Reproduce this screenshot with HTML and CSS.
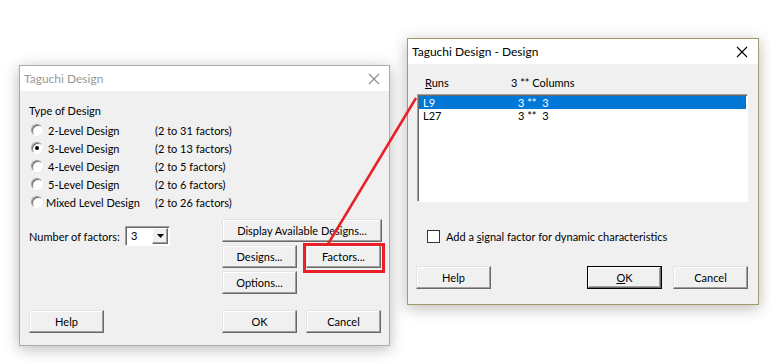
FILE: index.html
```html
<!DOCTYPE html>
<html>
<head>
<meta charset="utf-8">
<link rel="stylesheet" href="styles.css">
</head>
<body>
<div class="desktop">
  <div class="dlg dlg-main">
    <div class="titlebar inactive">
      <span class="title">Taguchi Design</span>
      <svg class="close" width="12" height="12" viewBox="0 0 12 12"><path d="M1 1 L11 11 M11 1 L1 11" stroke="#8c8c8c" stroke-width="1.1" fill="none"/></svg>
    </div>
    <div class="body main-body">
      <div class="group-title">Type of Design</div>
      <div class="radios">
        <div class="rrow"><span class="radio"></span><span class="rlabel">2-Level Design</span><span class="rdesc">(2 to 31 factors)</span></div>
        <div class="rrow"><span class="radio checked"></span><span class="rlabel">3-Level Design</span><span class="rdesc">(2 to 13 factors)</span></div>
        <div class="rrow"><span class="radio"></span><span class="rlabel">4-Level Design</span><span class="rdesc">(2 to 5 factors)</span></div>
        <div class="rrow"><span class="radio"></span><span class="rlabel">5-Level Design</span><span class="rdesc">(2 to 6 factors)</span></div>
        <div class="rrow"><span class="radio"></span><span class="rlabel mixed">Mixed Level Design</span><span class="rdesc">(2 to 26 factors)</span></div>
      </div>
      <div class="mid">
        <div class="nf">
          <span class="nf-label">Number of factors:</span>
          <div class="combo">
            <span class="combo-val">3</span>
            <span class="combo-btn"><svg width="7" height="4" viewBox="0 0 7 4"><path d="M0 0 H7 L3.5 4 Z" fill="#000"/></svg></span>
          </div>
        </div>
        <div class="btn-grid">
          <button class="btn wide">Display Available Designs...</button>
          <button class="btn">Designs...</button>
          <button class="btn">Factors...</button>
          <button class="btn">Options...</button>
        </div>
      </div>
      <div class="foot">
        <button class="btn">Help</button>
        <div class="spacer"></div>
        <button class="btn">OK</button>
        <button class="btn">Cancel</button>
      </div>
    </div>
  </div>

  <div class="dlg dlg-design">
    <div class="titlebar">
      <span class="title">Taguchi Design - Design</span>
      <svg class="close" width="12" height="12" viewBox="0 0 12 12"><path d="M1 1 L11 11 M11 1 L1 11" stroke="#000" stroke-width="1.1" fill="none"/></svg>
    </div>
    <div class="body design-body">
      <div class="list-head"><span class="col-runs"><u>R</u>uns</span><span class="col-cols">3 ** Columns</span></div>
      <div class="listbox">
        <div class="lrow sel"><span class="c1">L9</span><span class="c2">3 **&nbsp; 3</span></div>
        <div class="lrow"><span class="c1">L27</span><span class="c2">3 **&nbsp; 3</span></div>
      </div>
      <div class="chk-row"><span class="checkbox"></span><span>Add a <u>s</u>ignal factor for dynamic characteristics</span></div>
      <div class="foot foot2">
        <button class="btn">Help</button>
        <div class="spacer"></div>
        <button class="btn default"><u>O</u>K</button>
        <button class="btn">Cancel</button>
      </div>
    </div>
  </div>

  <svg class="annot" width="771" height="362" viewBox="0 0 771 362">
    <line x1="328" y1="244" x2="416" y2="98" stroke="#e8202a" stroke-width="2.5"/>
    <rect x="304.5" y="244.5" width="79" height="27" fill="none" stroke="#e8202a" stroke-width="3"/>
  </svg>
</div>
</body>
</html>
```
FILE: styles.css
```css
* { box-sizing: border-box; }
html, body { margin: 0; padding: 0; background: #fff; }
body {
  font-family: Lato, "Open Sans", "Liberation Sans", sans-serif;
  font-size: 11px;
  color: #000;
}
.desktop {
  position: relative;
  width: 771px;
  height: 362px;
  overflow: hidden;
}
.dlg {
  position: absolute;
  background: #f0f0f0;
  display: flex;
  flex-direction: column;
  box-shadow: 0 3px 14px rgba(0,0,0,0.28);
}
.dlg-main {
  left: 19px; top: 65px; width: 371px; height: 281px;
  border: 1px solid #ababab;
}
.dlg-design {
  left: 407px; top: 38px; width: 352px; height: 267px;
  border: 1px solid #a39a6a;
}
.titlebar {
  height: 25px;
  background: #fff;
  display: flex;
  align-items: center;
  padding: 0 0 0 4px;
  flex: none;
}
.titlebar .title { font-size: 12px; flex: 1; }
.titlebar.inactive .title { color: #999; }
.titlebar .close { margin-right: 10px; }
.dlg-main .titlebar .close { margin-right: 9px; }

.body { flex: 1; display: flex; flex-direction: column; }
.main-body { padding: 11px 8px 0 9px; }
.group-title { height: 19px; line-height: 18px; }
.radios { display: flex; flex-direction: column; }
.rrow { height: 18px; display: flex; align-items: center; }
.radio {
  width: 12px; height: 12px; border-radius: 50%;
  margin: 0 5px 0 2px;
  background: #fff;
  border: 1px solid;
  border-color: #a0a0a0 #fff #fff #a0a0a0;
  box-shadow: inset 1px 1px 0 #696969, 0 0 0 0.5px #e3e3e3;
  position: relative;
  flex: none;
}
.radio.checked::after {
  content: "";
  position: absolute;
  left: 3px; top: 3px; width: 4px; height: 4px; border-radius: 50%;
  background: #000;
}
.rlabel { width: 107px; flex: none; }
.rlabel.mixed { margin-left: -2px; width: 109px; }

.mid { display: flex; margin-top: 8px; }
.nf { display: flex; align-items: center; height: 20px; margin-top: 7px; }
.nf-label { width: 96px; }
.combo {
  width: 45px; height: 20px;
  background: #fff;
  border: 1px solid; border-color: #a0a0a0 #fff #fff #a0a0a0;
  box-shadow: inset 1px 1px 0 #696969;
  display: flex; align-items: stretch;
  padding: 1px 1px 1px 2px;
}
.combo-val { flex: 1; padding-left: 3px; line-height: 16px; }
.combo-btn {
  width: 16px;
  background: #f0f0f0;
  border: 1px solid; border-color: #fff #696969 #696969 #fff;
  box-shadow: inset -1px -1px 0 #a0a0a0;
  display: flex; align-items: center; justify-content: center;
}
.btn-grid {
  margin-left: auto;
  display: grid;
  grid-template-columns: 75px 75px;
  column-gap: 9px;
  row-gap: 3px;
}
.btn-grid .wide { grid-column: 1 / 3; }
.btn {
  font: inherit;
  color: #000;
  height: 23px;
  width: 75px;
  padding: 0;
  background: #f0f0f0;
  border: 1px solid;
  border-color: #e3e3e3 #696969 #696969 #e3e3e3;
  box-shadow: inset -1px -1px 0 #a0a0a0, inset 1px 1px 0 #fff;
}
.btn.wide { width: 160px; }
.btn.default {
  border: 1px solid #000;
  box-shadow: inset -1px -1px 0 #696969, inset 1px 1px 0 #fff, inset -2px -2px 0 #a0a0a0;
}
.foot { display: flex; gap: 9px; margin-top: 16px; }
.spacer { flex: 1; }

.design-body { padding: 11px 10px 0 9px; }
.list-head { height: 16px; line-height: 16px; display: flex; }
.col-runs { padding-left: 8px; width: 94px; }
.listbox {
  margin-top: 3px;
  height: 108px;
  background: #fff;
  border: 1px solid; border-color: #a0a0a0 #fff #fff #a0a0a0;
  box-shadow: inset 1px 1px 0 #696969;
  padding: 1px 1px 0 1px;
}
.lrow { height: 13px; line-height: 13px; display: flex; font-size: 11px; }
.lrow.sel { background: #0078d7; color: #fff; }
.c1 { padding-left: 4px; width: 99px; }
.chk-row { display: flex; align-items: center; gap: 6px; margin-top: 28px; padding-left: 10px; height: 13px; }
.checkbox {
  width: 13px; height: 13px; background: #fff;
  border: 1px solid #333;
  flex: none;
}
.foot2 { margin-top: 23px; gap: 11px; padding-left: 0; margin-left: -1px; }

.annot { position: absolute; left: 0; top: 0; pointer-events: none; }
```
